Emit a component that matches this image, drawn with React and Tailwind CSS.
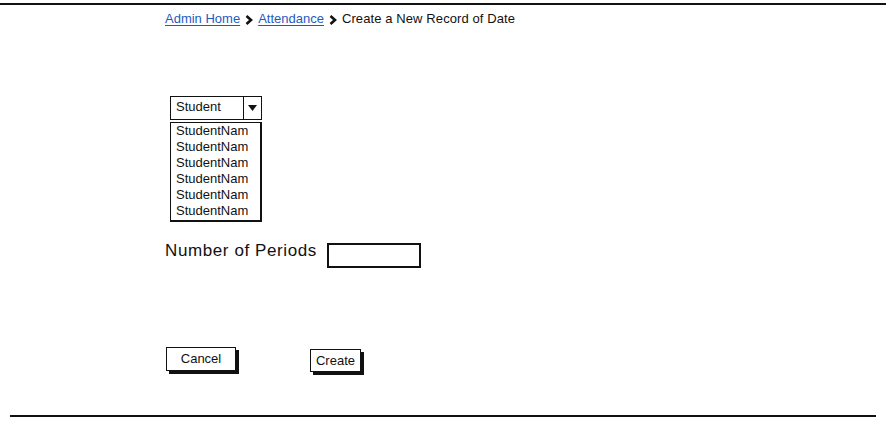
import React from 'react';

const ITEMS = ['StudentNam', 'StudentNam', 'StudentNam', 'StudentNam', 'StudentNam', 'StudentNam'];

const Chevron = () => (
    <svg width="8" height="10" viewBox="0 0 8 10" className="mx-[5px] mt-[2px]">
        <path d="M1.5 1 L6 5 L1.5 9" fill="none" stroke="#111" strokeWidth="2.6" />
    </svg>
);

export default function App() {
    return (
        <div className="w-[886px] h-[422px] bg-white text-[#111] flex flex-col" style={{ fontFamily: '"Liberation Sans", Arial, sans-serif' }}>
            {/* top rule */}
            <div className="mt-[3px] h-[2px] bg-[#111]" />

            <div className="pl-[165px] flex flex-col items-start">
                {/* Breadcrumb */}
                <div className="mt-[6px] flex items-center text-[13px] leading-[16px]">
                    <a className="text-[#1f5bbf] underline underline-offset-2">Admin Home</a>
                    <Chevron />
                    <a className="text-[#1f5bbf] underline underline-offset-2">Attendance</a>
                    <Chevron />
                    <span className="tracking-[0.1px]">Create a New Record of Date</span>
                </div>

                {/* Combo box */}
                <div className="ml-[5px] mt-[69px] flex flex-col">
                    <div className="w-[92px] h-[24px] border-[1.5px] border-[#111] flex items-stretch">
                        <span className="flex-1 pl-[5px] text-[13px] leading-[20px]">Student</span>
                        <span className="w-[18px] border-l-[1.5px] border-[#111] flex items-center justify-center">
                            <svg width="9" height="6" viewBox="0 0 9 6"><path d="M0 0 H9 L4.5 6 Z" fill="#111" /></svg>
                        </span>
                    </div>
                    <div className="mt-[2px] w-[92px] h-[100px] border-[#111] border-l border-t border-r-2 border-b-2 pl-[5px]">
                        {ITEMS.map((t, i) => (
                            <div key={i} className="text-[13px] leading-[16px]">{t}</div>
                        ))}
                    </div>
                </div>

                {/* Number of periods */}
                <div className="mt-[19px] flex items-start">
                    <span className="text-[17px] leading-[20px] tracking-[0.6px]">Number of Periods</span>
                    <div className="ml-[10px] mt-[2px] w-[94px] h-[25px] border-2 border-[#111] border-b-[2.5px]" />
                </div>

                {/* Buttons */}
                <div className="mt-[79px] ml-[1px] flex items-start">
                    <button className="w-[70px] h-[24px] border-[1.5px] border-[#111] shadow-[3px_3px_0_#111] bg-white text-[13px] leading-[20px]">Cancel</button>
                    <button className="ml-[74px] mt-[2px] w-[51px] h-[23px] border-[1.5px] border-[#111] shadow-[3px_3px_0_#111] bg-white text-[13px] leading-[20px]">Create</button>
                </div>
            </div>

            {/* bottom rule */}
            <div className="mt-auto mb-[5px] mx-[10px] h-[2px] bg-[#111]" />
        </div>
    );
}
